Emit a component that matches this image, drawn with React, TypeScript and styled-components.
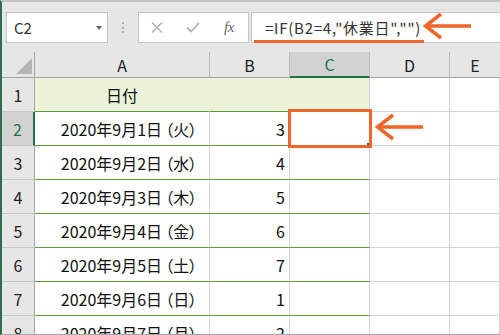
import React from 'react'
import styled, { createGlobalStyle } from 'styled-components'

const ORANGE = '#f0652a'
const XL_GREEN = '#217346'
const TABLE_GREEN = '#5e9c35'
const BAND = '#ebf3d9'
const GRID_LINE = '#d4d4d4'

const GlobalStyle = createGlobalStyle`
  html, body {
    margin: 0;
    padding: 0;
    background: #fff;
  }
  body {
    font-family: "Noto Sans CJK JP", "Noto Sans", sans-serif;
  }
`

const Frame = styled.div`
  width: 500px;
  height: 335px;
  box-sizing: border-box;
  border-left: 2px solid #2f6e4c;
  border-top: 2px solid #c4c4c4;
  border-bottom: 1px solid #a6a6a6;
  background: #e6e6e6;
  overflow: hidden;
  display: flex;
  flex-direction: column;
`

/* ---------- formula bar ---------- */

const Toolbar = styled.div`
  height: 50px;
  flex: none;
  display: flex;
  align-items: flex-start;
  padding: 10px 0 0 4px;
  box-sizing: border-box;
`

const NameBox = styled.div`
  width: 102px;
  height: 31px;
  box-sizing: border-box;
  border: 1px solid #c6c6c6;
  background: #fff;
  display: flex;
  align-items: center;
  justify-content: space-between;
  padding: 0 5px 0 7px;
  font-size: 15px;
  color: #333;
`

const DropArrow = styled.span`
  width: 0;
  height: 0;
  border-left: 3.5px solid transparent;
  border-right: 3.5px solid transparent;
  border-top: 4px solid #666;
`

const Grip = styled.div`
  width: 30px;
  display: flex;
  flex-direction: column;
  align-items: center;
  gap: 2.5px;
  padding-top: 10px;
`

const GripDot = styled.span`
  width: 2px;
  height: 2px;
  background: #b0b0b0;
`

const FxBox = styled.div`
  width: 111px;
  height: 31px;
  box-sizing: border-box;
  border: 1px solid #c6c6c6;
  background: #fff;
  display: flex;
  align-items: center;
`

const FxSlot = styled.span`
  width: 36px;
  display: flex;
  justify-content: center;
  align-items: center;
`

const FxLabel = styled.span`
  font-family: "Liberation Serif", serif;
  font-style: italic;
  font-size: 15px;
  color: #666;
  letter-spacing: -0.5px;
`

const FormulaBox = styled.div`
  flex: 1;
  margin-left: 2px;
  height: 31px;
  box-sizing: border-box;
  border: 1px solid #c6c6c6;
  border-right: none;
  background: #fff;
  position: relative;
  display: flex;
  align-items: center;
  padding-left: 13px;
  font-size: 15px;
  letter-spacing: 0.75px;
  color: #333;
`

const Underline = styled.span`
  position: absolute;
  left: 2px;
  top: 27px;
  width: 170px;
  height: 3px;
  background: ${ORANGE};
`

const ArrowSvg = styled.svg<{ $left: number; $top: number }>`
  position: absolute;
  left: ${p => p.$left}px;
  top: ${p => p.$top}px;
  overflow: visible;
  z-index: 2;
`

const Arrow = ({ left, top }: { left: number; top: number }) => (
  <ArrowSvg $left={left} $top={top} width="52" height="28" viewBox="0 0 52 28">
    <path d="M19 2 L3.5 14 L19 26" fill="none" stroke={ORANGE} strokeWidth="3.5" strokeLinejoin="miter" />
    <path d="M4 14 H49" stroke={ORANGE} strokeWidth="3.5" />
  </ArrowSvg>
)

/* ---------- sheet ---------- */

const Sheet = styled.div`
  display: grid;
  grid-template-columns: 33px 175px 80px 80px 80px 1fr;
  grid-template-rows: 26px;
  grid-auto-rows: 34px;
  background: #fff;
`

const Corner = styled.div`
  background: #e6e6e6;
  box-sizing: border-box;
  border-right: 1px solid #a3a3a3;
  border-bottom: 1px solid #a3a3a3;
  display: flex;
  align-items: flex-end;
  justify-content: flex-end;
  padding: 0 2px 3px 0;

  &::after {
    content: '';
    width: 16px;
    height: 16px;
    background: #b5b5b5;
    clip-path: polygon(100% 0, 100% 100%, 0 100%);
  }
`

const ColHeader = styled.div<{ $selected?: boolean; $last?: boolean }>`
  box-sizing: border-box;
  background: ${p => (p.$selected ? '#d2d2d2' : '#e6e6e6')};
  border-right: ${p => (p.$last ? 'none' : '1px solid #bdbdbd')};
  border-bottom: ${p => (p.$selected ? `2px solid ${XL_GREEN}` : '1px solid #a3a3a3')};
  color: ${p => (p.$selected ? XL_GREEN : '#222')};
  display: flex;
  align-items: center;
  justify-content: center;
  font-size: 16px;
`

const RowHeader = styled.div<{ $selected?: boolean }>`
  box-sizing: border-box;
  background: ${p => (p.$selected ? '#d2d2d2' : '#e6e6e6')};
  border-right: ${p => (p.$selected ? `2px solid ${XL_GREEN}` : '1px solid #a3a3a3')};
  border-bottom: 1px solid #c6c6c6;
  color: ${p => (p.$selected ? XL_GREEN : '#222')};
  display: flex;
  align-items: center;
  justify-content: center;
  font-size: 16px;
`

type Align = 'left' | 'center' | 'right'

const Cell = styled.div<{ $align?: Align; $band?: boolean; $table?: boolean; $hideRight?: boolean }>`
  position: relative;
  box-sizing: border-box;
  background: ${p => (p.$band ? BAND : '#fff')};
  border-right: 1px solid ${p => (p.$hideRight ? BAND : GRID_LINE)};
  border-bottom: 1px solid ${p => (p.$table ? TABLE_GREEN : GRID_LINE)};
  display: flex;
  align-items: center;
  justify-content: ${p => (p.$align === 'right' ? 'flex-end' : p.$align === 'center' ? 'center' : 'flex-start')};
  padding: 0 4px;
  font-size: 16px;
  font-feature-settings: "palt";
  color: #111;
  white-space: nowrap;
`

const DateText = styled.span`
  padding-left: 14px;
`

const Paren = styled.span`
  padding-left: 3px;
`

const Selection = styled.span`
  position: absolute;
  left: -2px;
  right: -3px;
  top: -3px;
  bottom: -3px;
  border: 3px solid ${ORANGE};
  z-index: 1;
  pointer-events: none;
`

const FillHandle = styled.span`
  position: absolute;
  right: 0;
  bottom: 0;
  width: 2px;
  height: 2px;
  background: ${XL_GREEN};
`

const columns = ['A', 'B', 'C', 'D', 'E']

const rows: { date: string; day: string; b: string }[] = [
  { date: '2020年9月1日', day: '（火）', b: '3' },
  { date: '2020年9月2日', day: '（水）', b: '4' },
  { date: '2020年9月3日', day: '（木）', b: '5' },
  { date: '2020年9月4日', day: '（金）', b: '6' },
  { date: '2020年9月5日', day: '（土）', b: '7' },
  { date: '2020年9月6日', day: '（日）', b: '1' },
  { date: '2020年9月7日', day: '（月）', b: '2' },
]

const App: React.FC = () => (
  <Frame>
    <GlobalStyle />
    <Toolbar>
      <NameBox>
        <span>C2</span>
        <DropArrow />
      </NameBox>
      <Grip>
        <GripDot />
        <GripDot />
        <GripDot />
      </Grip>
      <FxBox>
        <FxSlot>
          <svg width="12" height="11" viewBox="0 0 12 11">
            <path d="M1 0.5 L11 10.5 M11 0.5 L1 10.5" stroke="#b4b4b4" strokeWidth="1.6" />
          </svg>
        </FxSlot>
        <FxSlot>
          <svg width="14" height="11" viewBox="0 0 14 11">
            <path d="M1 5.5 L5 9.5 L13 1" fill="none" stroke="#b4b4b4" strokeWidth="1.8" />
          </svg>
        </FxSlot>
        <FxSlot>
          <FxLabel>fx</FxLabel>
        </FxSlot>
      </FxBox>
      <FormulaBox>
        =IF(B2=4,"休業日","")
        <Underline />
        <Arrow left={170} top={-1} />
      </FormulaBox>
    </Toolbar>

    <Sheet>
      <Corner />
      {columns.map((c, i) => (
        <ColHeader key={c} $selected={c === 'C'} $last={i === columns.length - 1}>
          {c}
        </ColHeader>
      ))}

      <RowHeader>1</RowHeader>
      <Cell $align="center" $band $hideRight $table>日付</Cell>
      <Cell $align="right" $band $hideRight $table />
      <Cell $band $table />
      <Cell />
      <Cell />

      {rows.map((r, i) => {
        const n = i + 2
        return (
          <React.Fragment key={n}>
            <RowHeader $selected={n === 2}>{n}</RowHeader>
            <Cell $align="center" $table>
              <DateText>
                {r.date}
                <Paren>{r.day}</Paren>
              </DateText>
            </Cell>
            <Cell $align="right" $table>
              {r.b}
            </Cell>
            <Cell $table>
              {n === 2 && (
                <Selection>
                  <FillHandle />
                </Selection>
              )}
            </Cell>
            <Cell>{n === 2 && <Arrow left={4} top={1} />}</Cell>
            <Cell />
          </React.Fragment>
        )
      })}
    </Sheet>
  </Frame>
)

export default App
